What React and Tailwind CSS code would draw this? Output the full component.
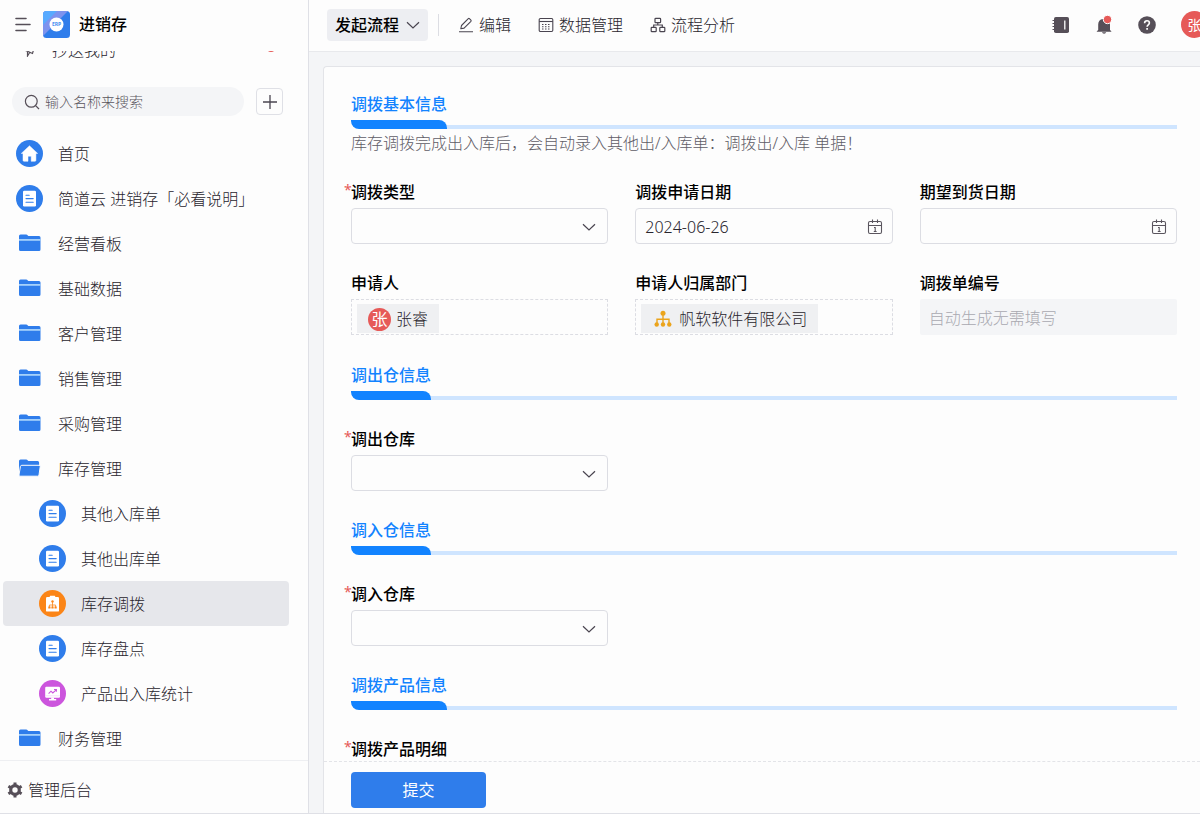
import { useState } from 'react';

const menu = [
  { name: '首页', icon: 'home' },
  { name: '简道云 进销存「必看说明」', icon: 'doc' },
  { name: '经营看板', icon: 'folder' },
  { name: '基础数据', icon: 'folder' },
  { name: '客户管理', icon: 'folder' },
  { name: '销售管理', icon: 'folder' },
  { name: '采购管理', icon: 'folder' },
  { name: '库存管理', icon: 'folderOpen' },
  { name: '其他入库单', icon: 'doc', child: true },
  { name: '其他出库单', icon: 'doc', child: true },
  { name: '库存调拨', icon: 'flow', child: true },
  { name: '库存盘点', icon: 'doc', child: true },
  { name: '产品出入库统计', icon: 'chart', child: true },
  { name: '财务管理', icon: 'folder' },
];

const HomeIcon = () => (
  <svg viewBox="0 0 27 27" className="size-[27px]">
    <circle cx="13.5" cy="13.5" r="13.5" fill="#2f7deb" />
    <path d="M13.5 5.8 21.6 13.4H19.9V20.3a1 1 0 0 1-1 1H15.2V16.2H12V21.3H8a1 1 0 0 1-1-1V13.4H5.3Z" fill="#fff" stroke="#fff" strokeWidth=".5" strokeLinejoin="round" />
  </svg>
);

const DocIcon = () => (
  <svg viewBox="0 0 27 27" className="size-[27px]">
    <circle cx="13.5" cy="13.5" r="13.5" fill="#2f7deb" />
    <rect x="7" y="5.8" width="13" height="15.6" rx="1.2" fill="#fff" />
    <path d="M10 10.2h3.2M10 13.6h7.2M10 17.2h7.2" stroke="#2f7deb" strokeWidth="1.1" strokeLinecap="round" />
  </svg>
);

const FlowIcon = () => (
  <svg viewBox="0 0 27 27" className="size-[27px]">
    <circle cx="13.5" cy="13.5" r="13.5" fill="#fb8517" />
    <rect x="7" y="7" width="13" height="14.6" rx="1.2" fill="#fff" />
    <rect x="10.8" y="5.8" width="5.4" height="2.4" rx=".6" fill="#fff" />
    <path d="M13.5 12v5M10.4 17v-2h6.2v2" stroke="#fb8517" fill="none" strokeWidth=".8" />
    <circle cx="13.5" cy="11.4" r="1.2" fill="#fb8517" />
    <path d="M9.3 16.6h2.2v2H9.3zM12.4 16.6h2.2v2h-2.2zM15.5 16.6h2.2v2h-2.2z" fill="#fb8517" />
  </svg>
);

const ChartIcon = () => (
  <svg viewBox="0 0 27 27" className="size-[27px]">
    <circle cx="13.5" cy="13.5" r="13.5" fill="#cc55dd" />
    <rect x="6.2" y="6.8" width="14.8" height="11" rx="1.2" fill="#fff" />
    <path d="M12.2 17.5h2.8v1.6h2.2v1.4H10v-1.4h2.2z" fill="#fff" />
    <path d="M6.2 15.8h14.8" stroke="#f0cdf5" strokeWidth=".6" />
    <path d="M9.6 13.6 12 11.2l1.8 1.8 3.4-3.2M15 9.5h2.4v2.2" stroke="#cc55dd" strokeWidth="1.1" fill="none" />
  </svg>
);

const FolderIcon = () => (
  <svg viewBox="0 0 27 27" className="size-[27px]">
    <path d="M3 7V6a1.5 1.5 0 0 1 1.5-1.5h5.6c.8 0 1.2.3 1.7.9l.6.7h10.6a1.5 1.5 0 0 1 1.5 1.5V19.5a1.5 1.5 0 0 1-1.5 1.5H4.5A1.5 1.5 0 0 1 3 19.5Z" fill="#2f7deb" />
    <path d="M3 9h21.500v1.800H3z" fill="#a5d1fb" />
  </svg>
);

const FolderOpenIcon = () => (
  <svg viewBox="0 0 27 27" className="size-[27px]">
    <path d="M3 19V6a1.5 1.5 0 0 1 1.5-1.5h5.6c.8 0 1.2.3 1.700.9l.6.7h9.200a1.500 1.500 0 0 1 1.500 1.500V12Z" fill="#2f7deb" />
    <path d="M5.800 10.300H23a1.200 1.200 0 0 1 1.200 1.400L23 20a1.400 1.400 0 0 1-1.400 1.200H4a1 1 0 0 1-1-1.200L4.400 11.500a1.500 1.500 0 0 1 1.400-1.200Z" fill="#2f7deb" stroke="#fdfdfd" />
  </svg>
);

const menuIcons = {
  home: HomeIcon,
  doc: DocIcon,
  flow: FlowIcon,
  chart: ChartIcon,
  folder: FolderIcon,
  folderOpen: FolderOpenIcon,
};

const Logo = () => (
  <svg viewBox="0 0 27 27" className="size-[27px]">
    <defs>
      <clipPath id="logo">
        <rect width="27" height="27" rx="3.5" />
      </clipPath>
    </defs>
    <g clipPath="url(#logo)">
      <rect width="27" height="27" fill="#2f7deb" />
      <path d="M0 0h25L0 25z" fill="#7d93ee" />
      <path d="M0 0h14L0 14z" fill="#58aaff" />
    </g>
    <circle cx="13.5" cy="13.5" r="7" fill="#fff" />
    <text x="13.5" y="15.4" textAnchor="middle" fontSize="5" fontWeight="700" fill="#4a8ff0">ERP</text>
  </svg>
);

const Chevron = ({ className }) => (
  <svg viewBox="0 0 14 14" className={className} fill="none" stroke="#4a4550" strokeWidth="1.2">
    <path d="M1 4.2 7 10l6-5.8" />
  </svg>
);

const CalendarIcon = () => (
  <svg viewBox="0 0 16 16" className="pointer-events-none absolute right-2.5 top-[11px] size-4" fill="none" stroke="#5a555e" strokeWidth="1.1">
    <rect x="1.5" y="2.5" width="13" height="12" rx="1.5" />
    <path d="M1.5 6.500h13M5.500.5v3.500M10.500.5v3.500M7 8.500h1.200v4M6.800 12.500h2.800" />
  </svg>
);

const PencilIcon = () => (
  <svg viewBox="0 0 16 16" className="size-4" fill="none" stroke="#4a4550" strokeWidth="1.1">
    <path d="M1 14.7h14M2.8 11.8l.7-3.3L10.300 1.700a.8.8 0 0 1 1.100 0l1.500 1.500a.8.8 0 0 1 0 1.100L6.100 11.100Z" strokeLinejoin="round" />
  </svg>
);

const TableIcon = () => (
  <svg viewBox="0 0 16 16" className="size-4" fill="none" stroke="#4a4550" strokeWidth="1.1">
    <rect x="1.2" y="1.5" width="13.6" height="13" rx="1.2" />
    <path d="M1.200 4.500h13.600" />
    <path d="M4 7.500h8.500M4 9.700h8.500M4 12h8.500" strokeDasharray="1.500 1.500" />
  </svg>
);

const FlowchartIcon = () => (
  <svg viewBox="0 0 16 16" className="size-4" fill="none" stroke="#4a4550" strokeWidth="1.2">
    <rect x="5" y="1.3" width="5.6" height="4.4" rx=".8" />
    <rect x="1.2" y="10.3" width="5" height="4.4" rx=".8" />
    <rect x="9.8" y="10.3" width="5" height="4.4" rx=".8" />
    <path d="M7.8 5.700V8M3.700 10.300V8h8.600v2.300" />
  </svg>
);

const OrgIcon = () => (
  <svg viewBox="0 0 18 18" className="size-[18px] shrink-0">
    <path d="M9 4v11M3 14V9.2h12V14" fill="none" stroke="#eba41c" strokeWidth="1.4" />
    <circle cx="9" cy="3.2" r="2.5" fill="#eba41c" />
    <circle cx="2.7" cy="14.5" r="2.2" fill="#eba41c" />
    <circle cx="9" cy="14.5" r="2.2" fill="#eba41c" />
    <circle cx="15.3" cy="14.5" r="2.2" fill="#eba41c" />
  </svg>
);

const NotebookIcon = () => (
  <svg viewBox="0 0 18 18" className="size-[18px]">
    <rect x="2" y="1" width="15" height="16" rx="1.8" fill="#564f58" />
    <path d="M.5 4.500h3M.5 7.500h3M.5 10.500h3M.5 13.500h3" stroke="#564f58" strokeWidth="1.2" />
    <path d="M12.800 4.500v9" stroke="#fff" strokeWidth="1.3" />
  </svg>
);

const BellIcon = () => (
  <svg viewBox="0 0 18 18" className="size-[18px] overflow-visible">
    <path d="M3.2 14V8.500A5.600 5.600 0 0 1 8 2.900a1.200 1.200 0 0 1 2.200 0 5.600 5.600 0 0 1 4.800 5.600V14l1.300 1.300v.5H1.800v-.5ZM7 16.300h4.200c-.3.900-1 1.400-2.100 1.400S7.300 17.200 7 16.300Z" fill="#564f58" />
    <circle cx="12.500" cy="3.500" r="4.200" fill="#e65a58" stroke="#fff" />
  </svg>
);

const HelpIcon = () => (
  <svg viewBox="0 0 18 18" className="size-[18px]" fill="none" stroke="#fff">
    <circle cx="9" cy="9" r="8.8" fill="#564f58" stroke="none" />
    <path d="M6.600 7.200C6.600 5.600 7.600 4.800 9 4.800s2.400.9 2.400 2.200c0 1.800-2.300 1.900-2.300 3.700" strokeWidth="1.6" />
    <path d="M9.100 12v1.700" strokeWidth="1.7" />
  </svg>
);

const GearIcon = () => (
  <svg viewBox="0 0 16 16" className="size-4">
    <circle cx="8" cy="8" r="4.3" fill="none" stroke="#564f58" strokeWidth="3.2" />
    <path d="M8 .4v3M8 12.600v3M1.400 4.200 4 5.700M12 10.300l2.600 1.500M1.400 11.800 4 10.300M12 5.700l2.600-1.500" stroke="#564f58" strokeWidth="3" />
  </svg>
);

function MenuItem({ item, active, onClick }) {
  const Icon = menuIcons[item.icon];
  return (
    <li>
      <a
        href="#"
        onClick={onClick}
        className={`ml-[3px] mr-[19px] flex h-[45px] items-center gap-[15px] rounded ${
          item.child ? 'pl-9' : 'pl-[13px]'
        } ${active ? 'bg-[#e6e7eb]' : ''}`}
      >
        <Icon />
        <span className="whitespace-nowrap">{item.name}</span>
      </a>
    </li>
  );
}

function Sidebar() {
  const [active, setActive] = useState('库存调拨');

  return (
    <aside className="flex w-[309px] shrink-0 flex-col border-r border-[#dfe0e6]">
      <div className="flex h-[51px] shrink-0 items-center pb-[3px] pl-[15px]">
        <button aria-label="收起菜单">
          <svg viewBox="0 0 16 16" className="size-4" stroke="#564f58" strokeWidth="1.6" strokeLinecap="round">
            <path d="M1 2.500h10M1 8.500h14M1 14.500h10" />
          </svg>
        </button>
        <span className="ml-3">
          <Logo />
        </span>
        <span className="ml-[9px] font-medium text-black">进销存</span>
      </div>

      <div className="min-h-0 flex-1 overflow-y-auto [scrollbar-width:none]">
        {/* already scrolled a little, first row sits under the header */}
        <a href="#" className="-mt-6 flex h-[45px] items-center pl-[22px]">
          <svg viewBox="0 0 14 14" className="size-3.5" fill="none" stroke="#564f58" strokeWidth="1.2">
            <path d="M1 6.500 13 1.500 10.500 10.500 6 8.500ZM5.500 8v5l2.200-3.500" />
          </svg>
          <span className="ml-4">抄送我的</span>
          <span className="ml-auto mr-[33px] mt-[17px] size-2 self-start rounded-full bg-[#e65a58]" />
        </a>

        <div className="my-[15px] flex h-[29px] items-center gap-3 pl-3 pr-[25px]">
          <label className="flex h-[29px] flex-1 items-center gap-[5px] rounded-full bg-[#f4f5f7] pl-3">
            <svg viewBox="0 0 16 16" className="size-4 shrink-0" fill="none" stroke="#564f58" strokeWidth="1.2">
              <circle cx="7.300" cy="7.300" r="5.900" />
              <path d="m11.600 11.600 3.400 3.400" />
            </svg>
            <input
              aria-label="搜索"
              placeholder="输入名称来搜索"
              className="w-full min-w-0 bg-transparent text-sm outline-none placeholder:text-[#5a555e]"
            />
          </label>
          <button aria-label="新建" className="flex size-[27px] items-center justify-center rounded border border-[#dfe0e6]">
            <svg viewBox="0 0 14 14" className="size-3.5" stroke="#4a4550" strokeWidth="1.3">
              <path d="M7 0v14M0 7h14" />
            </svg>
          </button>
        </div>

        <ul>
          {menu.map((item) => (
            <MenuItem
              key={item.name}
              item={item}
              active={active === item.name}
              onClick={() => setActive(item.name)}
            />
          ))}
        </ul>
      </div>

      <a href="#" className="flex h-[53px] shrink-0 items-center gap-[5px] border-t border-[#eeeff2] pl-[7px] pt-1.5">
        <GearIcon />
        管理后台
      </a>
    </aside>
  );
}

function Section({ title, desc }) {
  return (
    <div>
      <div className="flex items-end">
        <h3 className="font-medium text-[#1283ff]">
          {title}
          <span className="mt-1 block h-[9px] rounded-bl-lg rounded-tr-lg bg-[#1283ff]" />
        </h3>
        <div className="h-1 flex-1 bg-[#cfe5ff]" />
      </div>
      {desc && <p className="pt-1 leading-5 text-[#5f5c66]">{desc}</p>}
    </div>
  );
}

function Field({ label, id, required, children }) {
  return (
    <div className="min-w-0">
      <label htmlFor={id} className="relative mb-1 block font-medium text-black">
        {required && <span className="absolute -left-[7px] text-sm font-normal text-[#e65a58]">*</span>}
        {label}
      </label>
      {children}
    </div>
  );
}

function Select({ id }) {
  return (
    <div className="relative">
      <select id={id} className="block h-9 w-full appearance-none rounded border border-[#dcdde3] px-2.5" />
      <Chevron className="pointer-events-none absolute right-3 top-3 size-3.5" />
    </div>
  );
}

function DateInput({ id, value }) {
  return (
    <div className="relative">
      <input id={id} defaultValue={value} className="block h-9 w-full rounded border border-[#dcdde3] px-[9px] pt-0.5 outline-none" />
      <CalendarIcon />
    </div>
  );
}

function App() {
  return (
    <div className="flex h-screen overflow-hidden border-b border-[#dfe0e6] bg-[#fdfdfd] font-['Noto_Sans','Noto_Sans_CJK_SC',sans-serif] text-base font-light text-[#29252d]">
      <Sidebar />

      <main className="flex min-w-0 flex-1 flex-col bg-[#f4f5f7]">
        <header className="flex h-[52px] shrink-0 items-center border-b border-[#e8e9ec] bg-[#fdfdfd] pb-0.5 pl-[18px]">
          <button className="flex h-8 items-center gap-[7px] rounded bg-[#edeef2] px-2 font-medium text-black">
            发起流程
            <Chevron className="size-3.5" />
          </button>
          <span className="ml-2.5 h-[22px] w-px bg-[#dcdde3]" />
          <nav className="ml-[19px] flex items-center gap-[27px]">
            <a href="#" className="flex items-center gap-[5px]">
              <PencilIcon />
              编辑
            </a>
            <a href="#" className="flex items-center gap-[5px]">
              <TableIcon />
              数据管理
            </a>
            <a href="#" className="flex items-center gap-[5px]">
              <FlowchartIcon />
              流程分析
            </a>
          </nav>
          <div className="-mr-2 ml-auto flex items-center gap-[25px]">
            <button aria-label="通讯录"><NotebookIcon /></button>
            <button aria-label="消息"><BellIcon /></button>
            <button aria-label="帮助"><HelpIcon /></button>
            <span className="flex size-[27px] items-center justify-center rounded-full bg-[#e65a58] text-sm font-normal text-white">张</span>
          </div>
        </header>

        <form className="ml-3.5 mt-3.5 flex min-h-0 flex-1 flex-col rounded-tl border-l border-t border-[#e3e4e8] bg-[#fdfdfd]">
          <div className="flex min-h-0 flex-1 flex-col gap-[27px] overflow-y-auto pl-[27px] pr-[23px] pt-[25px] [scrollbar-width:none]">
            <Section
              title="调拨基本信息"
              desc="库存调拨完成出入库后，会自动录入其他出/入库单：调拨出/入库 单据！"
            />
            <div className="grid grid-cols-3 gap-[27px] pb-px">
              <Field label="调拨类型" id="type" required>
                <Select id="type" />
              </Field>
              <Field label="调拨申请日期" id="applyDate">
                <DateInput id="applyDate" value="2024-06-26" />
              </Field>
              <Field label="期望到货日期" id="arriveDate">
                <DateInput id="arriveDate" />
              </Field>
              <Field label="申请人">
                <div className="flex h-9 items-center border border-dashed border-[#dcdde3] px-[5px] pt-0.5">
                  <span className="flex h-[29px] items-center gap-[5px] bg-[#eff0f2] px-[11px] pt-0.5">
                    <span className="flex size-[23px] items-center justify-center rounded-full bg-[#e65a58] font-normal text-white">张</span>
                    张睿
                  </span>
                </div>
              </Field>
              <Field label="申请人归属部门">
                <div className="flex h-9 items-center border border-dashed border-[#dcdde3] px-[5px] pt-0.5">
                  <span className="flex h-[29px] items-center gap-[7px] whitespace-nowrap bg-[#eff0f2] pl-[13px] pr-[11px] pt-0.5">
                    <OrgIcon />
                    帆软软件有限公司
                  </span>
                </div>
              </Field>
              <Field label="调拨单编号" id="code">
                <input
                  id="code"
                  disabled
                  placeholder="自动生成无需填写"
                  className="block h-9 w-full rounded-xs bg-[#f4f5f7] px-[9px] pt-0.5 placeholder:text-[#a9a9b0]"
                />
              </Field>
            </div>

            <Section title="调出仓信息" />
            <div className="grid grid-cols-3 gap-[27px]">
              <Field label="调出仓库" id="outStore" required>
                <Select id="outStore" />
              </Field>
            </div>

            <Section title="调入仓信息" />
            <div className="grid grid-cols-3 gap-[27px]">
              <Field label="调入仓库" id="inStore" required>
                <Select id="inStore" />
              </Field>
            </div>

            <Section title="调拨产品信息" />
            <Field label="调拨产品明细" required />
          </div>

          <div className="shrink-0 border-t border-dashed border-[#e3e4e8] pb-[5px] pl-[27px] pt-2.5">
            <button type="button" className="block h-9 w-[135px] rounded bg-[#2f7deb] font-normal text-white">
              提交
            </button>
          </div>
        </form>
      </main>
    </div>
  );
}

export default App;
